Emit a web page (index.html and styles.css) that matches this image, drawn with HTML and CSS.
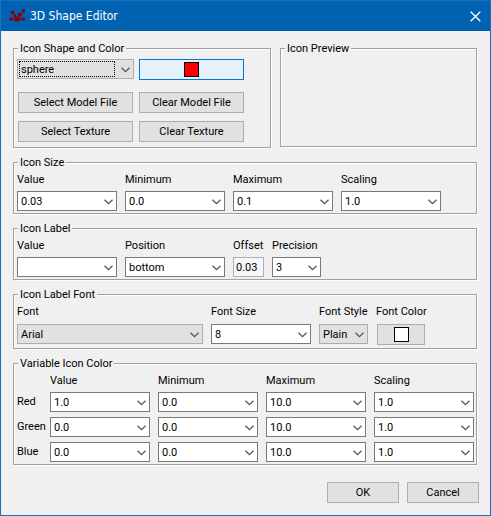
FILE: index.html
```html
<!DOCTYPE html>
<html lang="en">
<head>
<meta charset="utf-8">
<title>3D Shape Editor</title>
<link rel="stylesheet" href="styles.css">
</head>
<body>
<svg class="defs" aria-hidden="true">
  <symbol id="chevron" viewBox="0 0 9 6"><path d="M0.5 0.8 4.5 4.6 8.5 0.8" fill="none" stroke="#555" stroke-width="1.3"/></symbol>
</svg>
<div class="window">
  <header class="titlebar">
    <svg class="logo" viewBox="0 0 17 14" aria-hidden="true">
      <g stroke="#5a1a38" stroke-width="1" fill="none"><path d="M3.500 4 7.500 10 11 6 14.500 2.500M2 10.500H14"/></g>
      <g fill="#7d0611"><ellipse cx="3.500" cy="3.500" rx="1.800" ry="2.100"/><circle cx="14.500" cy="1.800" r="1.700"/><circle cx="10.800" cy="5.700" r="2.200"/><circle cx="5.800" cy="6.800" r="1.300"/><ellipse cx="8" cy="10" rx="3.200" ry="2.800"/><rect x="0" y="8.500" width="4" height="3" rx="1"/><rect x="12" y="8.500" width="4" height="3" rx="1"/></g>
    </svg>
    <h1 class="title">3D Shape Editor</h1>
    <button class="close" type="button" aria-label="Close"><svg viewBox="0 0 11 11"><path d="M0.700 0.700 10.300 10.300M10.300 0.700 0.700 10.300" stroke="#fff" stroke-width="1.300"/></svg></button>
  </header>
  <form class="content">
    <div class="top">
      <fieldset class="group shape">
        <legend>Icon Shape and Color</legend>
        <div class="shape-grid">
          <span class="combo flat focused"><select aria-label="Icon shape"><option>sphere</option></select><svg><use href="#chevron"/></svg></span>
          <button class="btn active" type="button" aria-label="Icon color"><span class="swatch red"></span></button>
          <button class="btn inset" type="button">Select Model File</button>
          <button class="btn" type="button">Clear Model File</button>
          <button class="btn inset" type="button">Select Texture</button>
          <button class="btn" type="button">Clear Texture</button>
        </div>
      </fieldset>
      <fieldset class="group preview"><legend>Icon Preview</legend></fieldset>
    </div>

    <fieldset class="group">
      <legend>Icon Size</legend>
      <div class="row">
        <div class="field"><label for="size-value">Value</label><span class="combo"><select id="size-value"><option>0.03</option></select><svg><use href="#chevron"/></svg></span></div>
        <div class="field"><label for="size-min">Minimum</label><span class="combo"><select id="size-min"><option>0.0</option></select><svg><use href="#chevron"/></svg></span></div>
        <div class="field"><label for="size-max">Maximum</label><span class="combo"><select id="size-max"><option>0.1</option></select><svg><use href="#chevron"/></svg></span></div>
        <div class="field"><label for="size-scale">Scaling</label><span class="combo"><select id="size-scale"><option>1.0</option></select><svg><use href="#chevron"/></svg></span></div>
      </div>
    </fieldset>

    <fieldset class="group">
      <legend>Icon Label</legend>
      <div class="row">
        <div class="field"><label for="label-value">Value</label><span class="combo"><select id="label-value"><option></option></select><svg><use href="#chevron"/></svg></span></div>
        <div class="field"><label for="label-pos">Position</label><span class="combo"><select id="label-pos"><option>bottom</option></select><svg><use href="#chevron"/></svg></span></div>
        <div class="field tiny"><label for="label-offset">Offset</label><input id="label-offset" class="text" type="text" value="0.03"></div>
        <div class="field small"><label for="label-prec">Precision</label><span class="combo"><select id="label-prec"><option>3</option></select><svg><use href="#chevron"/></svg></span></div>
      </div>
    </fieldset>

    <fieldset class="group font">
      <legend>Icon Label Font</legend>
      <div class="row">
        <div class="field wide"><label for="font-name">Font</label><span class="combo flat"><select id="font-name"><option>Arial</option></select><svg><use href="#chevron"/></svg></span></div>
        <div class="field"><label for="font-size">Font Size</label><span class="combo"><select id="font-size"><option>8</option></select><svg><use href="#chevron"/></svg></span></div>
        <div class="field small"><label for="font-style">Font Style</label><span class="combo flat"><select id="font-style"><option>Plain</option></select><svg><use href="#chevron"/></svg></span></div>
        <div class="field small"><label for="font-color">Font Color</label><button id="font-color" class="btn" type="button"><span class="swatch"></span></button></div>
      </div>
    </fieldset>

    <fieldset class="group">
      <legend>Variable Icon Color</legend>
      <div class="color-grid">
        <span></span><span class="head">Value</span><span class="head">Minimum</span><span class="head">Maximum</span><span class="head">Scaling</span>
        <label for="red-value">Red</label>
        <span class="combo"><select id="red-value"><option>1.0</option></select><svg><use href="#chevron"/></svg></span>
        <span class="combo"><select aria-label="Red minimum"><option>0.0</option></select><svg><use href="#chevron"/></svg></span>
        <span class="combo"><select aria-label="Red maximum"><option>10.0</option></select><svg><use href="#chevron"/></svg></span>
        <span class="combo"><select aria-label="Red scaling"><option>1.0</option></select><svg><use href="#chevron"/></svg></span>
        <label for="green-value">Green</label>
        <span class="combo"><select id="green-value"><option>0.0</option></select><svg><use href="#chevron"/></svg></span>
        <span class="combo"><select aria-label="Green minimum"><option>0.0</option></select><svg><use href="#chevron"/></svg></span>
        <span class="combo"><select aria-label="Green maximum"><option>10.0</option></select><svg><use href="#chevron"/></svg></span>
        <span class="combo"><select aria-label="Green scaling"><option>1.0</option></select><svg><use href="#chevron"/></svg></span>
        <label for="blue-value">Blue</label>
        <span class="combo"><select id="blue-value"><option>0.0</option></select><svg><use href="#chevron"/></svg></span>
        <span class="combo"><select aria-label="Blue minimum"><option>0.0</option></select><svg><use href="#chevron"/></svg></span>
        <span class="combo"><select aria-label="Blue maximum"><option>10.0</option></select><svg><use href="#chevron"/></svg></span>
        <span class="combo"><select aria-label="Blue scaling"><option>1.0</option></select><svg><use href="#chevron"/></svg></span>
      </div>
    </fieldset>

    <div class="actions">
      <button class="btn" type="button">OK</button>
      <button class="btn" type="button">Cancel</button>
    </div>
  </form>
</div>
</body>
</html>
```
FILE: styles.css
```css
* { box-sizing: border-box; }

body {
  margin: 0;
  background: #f0f0f0;
  color: #000;
  font: 11px/14px Roboto, "DejaVu Sans Condensed", sans-serif;
}

button, select, input { font: inherit; color: inherit; margin: 0; border-radius: 0; }

.defs { position: absolute; width: 0; height: 0; }

.window {
  min-height: 100vh;
  border: 1px solid #1a70b8;
  background: #f0f0f0;
}

.titlebar {
  display: flex;
  align-items: center;
  gap: 4px;
  height: 30px;
  padding: 0 9px 0 8px;
  background: #0063b1;
  color: #fff;
}
.logo { width: 17px; height: 14px; }
.title { flex: 1; margin: 0; font: 12px/16px "DejaVu Sans Condensed", "Noto Sans", sans-serif; }
.close { display: flex; padding: 0; border: 0; background: none; }
.close svg { width: 11px; height: 11px; }

.content {
  display: flex;
  flex-direction: column;
  gap: 7px;
  padding: 10px 13px 12px 12px;
}

.top { display: flex; gap: 9px; }

.group {
  min-width: 0;
  margin: 0;
  padding: 2px 3px;
  border: 1px solid #a0a0a0;
  box-shadow: 1px 1px #fff, inset 1px 1px #fff;
}
.group legend {
  height: 15px;
  margin-left: 1px;
  padding: 0 2px;
  background: #f0f0f0;
  line-height: 16px;
  white-space: nowrap;
}

.shape { flex: 0 0 258px; padding: 3px 3px 5px; }
.shape-grid {
  display: grid;
  grid-template-columns: 117px 105px;
  grid-template-rows: 25px 21px 21px;
  gap: 8px 5px;
}
.inset { margin: 0 1px; }
.preview { flex: 1; margin-bottom: 1px; }

.row { display: flex; gap: 8px; }
.field { display: flex; flex-direction: column; gap: 5px; width: 100px; white-space: nowrap; }
.field label, .head { height: 14px; line-height: 16px; }
.field .btn { margin-left: 1px; }
.tiny { width: 31px; }
.small { width: 49px; }
.wide { width: 186px; }
.font { padding-bottom: 3px; }
.font .field { gap: 6px; }

.combo { position: relative; display: block; height: 20px; }
.combo select {
  display: block;
  width: 100%;
  height: 20px;
  padding: 2px 16px 0 3px;
  border: 1px solid #7a7a7a;
  background: #fff;
  appearance: none;
}
.combo svg {
  position: absolute;
  right: 4px;
  top: 8px;
  width: 9px;
  height: 6px;
  pointer-events: none;
}
.combo.flat select { border-color: #adadad; background: #e1e1e1; }
.focused::after {
  content: "";
  position: absolute;
  inset: 2px 19px 2px 2px;
  border: 1px dotted #000;
  pointer-events: none;
}

.text {
  width: 100%;
  height: 20px;
  padding: 0 2px;
  border: 1px solid #b0b0b8;
  background: #f7f7f7;
}

.btn {
  display: flex;
  align-items: center;
  justify-content: center;
  height: 21px;
  padding: 0;
  border: 1px solid #adadad;
  background: #e1e1e1;
}
.active { border-color: #0078d7; background: #e5f1fb; }
.swatch { width: 15px; height: 15px; border: 1px solid #000; background: #fff; }
.red { background: #f00; }

.color-grid {
  display: grid;
  grid-template-columns: 25px repeat(4, 100px);
  grid-template-rows: 14px;
  grid-auto-rows: 20px;
  gap: 5px 8px;
  align-items: center;
  white-space: nowrap;
}
.color-grid label { line-height: 16px; }

.actions { display: flex; justify-content: flex-end; gap: 8px; margin: 10px -2px 0 0; }
.actions .btn { width: 72px; }
```
